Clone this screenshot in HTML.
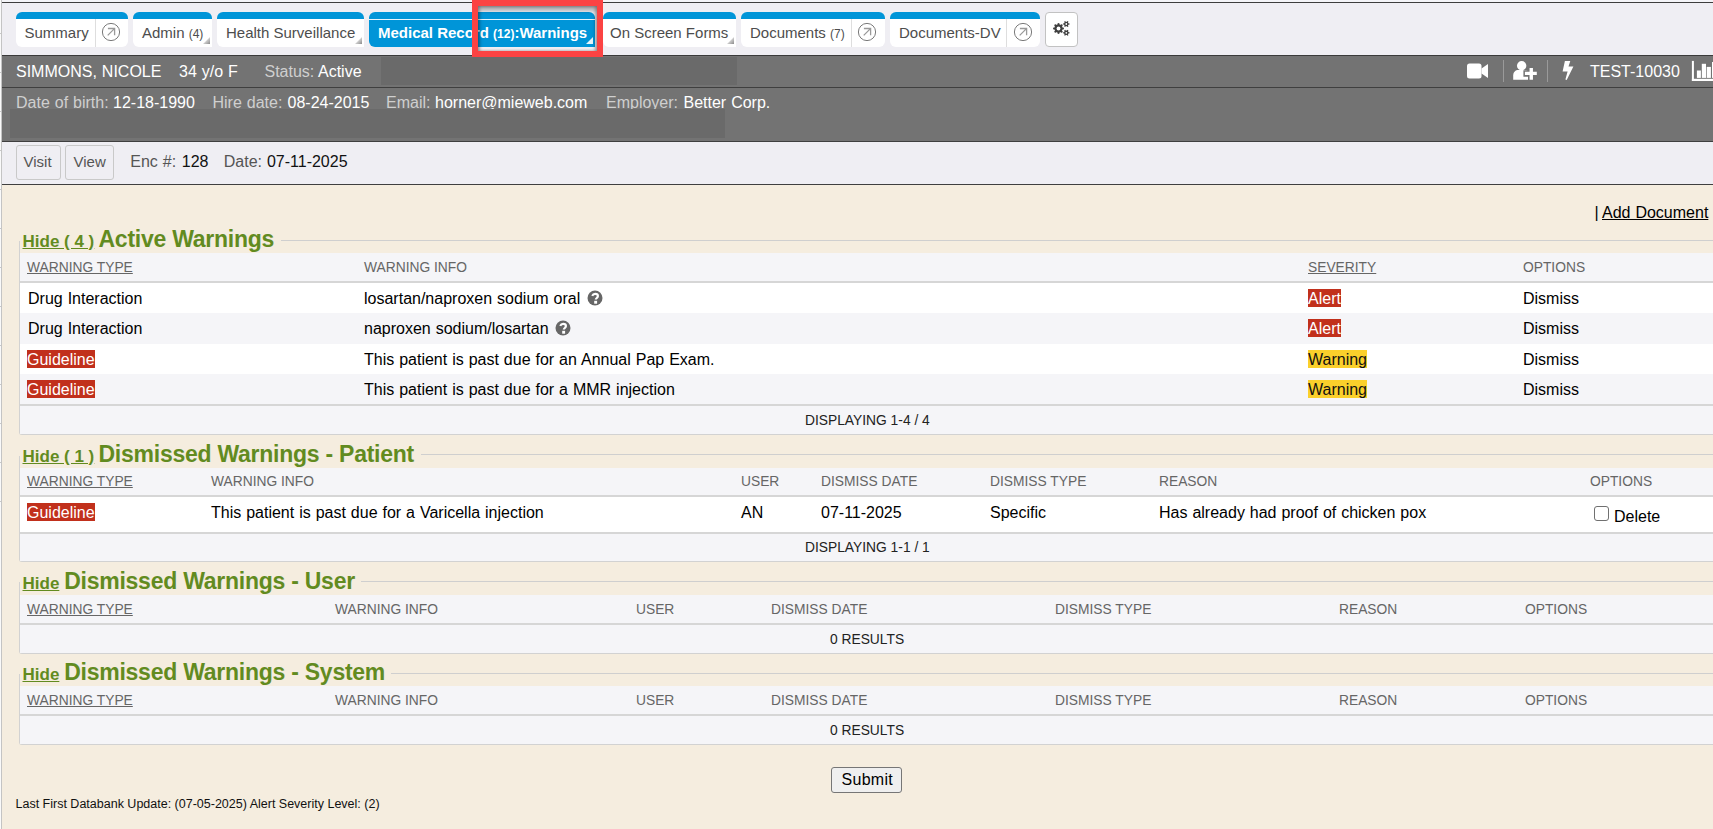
<!DOCTYPE html>
<html><head><meta charset="utf-8"><title>Warnings</title>
<style>
html,body{margin:0;padding:0}
body{width:1713px;height:829px;overflow:hidden;position:relative;font-family:"Liberation Sans",sans-serif;background:#fafafa}
.t{position:absolute;line-height:1;white-space:nowrap}
.w{word-spacing:0.5px}
</style></head><body>
<div style="position:absolute;left:1px;top:0px;width:1px;height:829px;background:#c4c4c4"></div>
<div style="position:absolute;left:0px;top:33px;width:1px;height:1px;background:#c8c8c8"></div>
<div style="position:absolute;left:0px;top:72px;width:1px;height:1px;background:#c8c8c8"></div>
<div style="position:absolute;left:0px;top:111px;width:1px;height:1px;background:#c8c8c8"></div>
<div style="position:absolute;left:0px;top:150px;width:1px;height:1px;background:#c8c8c8"></div>
<div style="position:absolute;left:0px;top:189px;width:1px;height:1px;background:#c8c8c8"></div>
<div style="position:absolute;left:0px;top:228px;width:1px;height:1px;background:#c8c8c8"></div>
<div style="position:absolute;left:0px;top:267px;width:1px;height:1px;background:#c8c8c8"></div>
<div style="position:absolute;left:0px;top:306px;width:1px;height:1px;background:#c8c8c8"></div>
<div style="position:absolute;left:0px;top:345px;width:1px;height:1px;background:#c8c8c8"></div>
<div style="position:absolute;left:0px;top:384px;width:1px;height:1px;background:#c8c8c8"></div>
<div style="position:absolute;left:0px;top:423px;width:1px;height:1px;background:#c8c8c8"></div>
<div style="position:absolute;left:0px;top:462px;width:1px;height:1px;background:#c8c8c8"></div>
<div style="position:absolute;left:0px;top:501px;width:1px;height:1px;background:#c8c8c8"></div>
<div style="position:absolute;left:2px;top:0px;width:1711px;height:2px;background:#f4f4f8"></div>
<div style="position:absolute;left:2px;top:2px;width:1711px;height:1px;background:#3d3d3d"></div>
<div style="position:absolute;left:2px;top:3px;width:1711px;height:52px;background:#efeef3"></div>
<div style="position:absolute;left:2px;top:55px;width:1711px;height:1px;background:#3a3a3a"></div>
<div style="position:absolute;left:2px;top:56px;width:1711px;height:31px;background:#737373"></div>
<div style="position:absolute;left:2px;top:87px;width:1711px;height:1px;background:#3f3f3f"></div>
<div style="position:absolute;left:2px;top:88px;width:1711px;height:53px;background:#737373"></div>
<div style="position:absolute;left:2px;top:141px;width:1711px;height:1px;background:#3f3f3f"></div>
<div style="position:absolute;left:2px;top:142px;width:1711px;height:42px;background:#efeef3"></div>
<div style="position:absolute;left:2px;top:184px;width:1711px;height:1px;background:#3f3f3f"></div>
<div style="position:absolute;left:2px;top:185px;width:1711px;height:644px;background:#f5eddf"></div>
<div style="position:absolute;left:16px;top:12px;width:112px;height:28px;border-top:7px solid #0095d8;background:#fff;border-radius:6px"></div>
<div style="position:absolute;left:95px;top:19px;width:1px;height:28px;background:#dedede"></div>
<div class="t" style="left:24.5px;top:25px;font-size:15px;font-weight:400;color:#4d4d4d;">Summary</div>
<svg style="position:absolute;left:101.4px;top:22.299999999999997px" width="20" height="20" viewBox="0 0 20 20"><circle cx="10" cy="10" r="8.6" fill="none" stroke="#7a7a7a" stroke-width="1"/><path d="M6.7 13.4 L13.2 6.9 M6.9 6.5 L13.6 6.5 L13.6 13.3" fill="none" stroke="#9a9a9a" stroke-width="1.3"/></svg>
<div style="position:absolute;left:133px;top:12px;width:79px;height:28px;border-top:7px solid #0095d8;background:#fff;border-radius:6px 6px 0 6px"></div>
<div class="t" style="left:142px;top:25px;font-size:15px;font-weight:400;color:#4d4d4d;">Admin <span style="font-size:12px">(4)</span></div>
<svg style="position:absolute;left:203px;top:37px" width="7" height="7"><defs><linearGradient id="cg210" x1="0" y1="0" x2="1" y2="1"><stop offset="0.45" stop-color="#d8d8d8"/><stop offset="1" stop-color="#8a8a8a"/></linearGradient></defs><path d="M7 0 L7 7 L0 7 Z" fill="url(#cg210)"/></svg>
<div style="position:absolute;left:217px;top:12px;width:147px;height:28px;border-top:7px solid #0095d8;background:#fff;border-radius:6px 6px 0 6px"></div>
<div class="t" style="left:226px;top:25px;font-size:15px;font-weight:400;color:#4d4d4d;">Health Surveillance</div>
<svg style="position:absolute;left:355px;top:37px" width="7" height="7"><defs><linearGradient id="cg362" x1="0" y1="0" x2="1" y2="1"><stop offset="0.45" stop-color="#d8d8d8"/><stop offset="1" stop-color="#8a8a8a"/></linearGradient></defs><path d="M7 0 L7 7 L0 7 Z" fill="url(#cg362)"/></svg>
<div style="position:absolute;left:369px;top:12px;width:226px;height:28px;border-top:7px solid #0095d8;background:#0095d8;border-radius:6px 6px 0 6px"></div>
<div style="position:absolute;left:369px;top:19px;width:226px;height:1px;background:#e8f4fb"></div>
<div class="t" style="left:378px;top:25px;font-size:15px;font-weight:700;color:#fff;">Medical Record <span style="font-size:12px">(12)</span>:Warnings</div>
<svg style="position:absolute;left:586px;top:37px" width="7" height="7"><path d="M7 0 L7 7 L0 7 Z" fill="rgba(255,255,255,.9)"/></svg>
<div style="position:absolute;left:603px;top:12px;width:133px;height:28px;border-top:7px solid #0095d8;background:#fff;border-radius:6px 6px 0 6px"></div>
<div class="t" style="left:610px;top:25px;font-size:15px;font-weight:400;color:#4d4d4d;">On Screen Forms</div>
<svg style="position:absolute;left:727px;top:37px" width="7" height="7"><defs><linearGradient id="cg734" x1="0" y1="0" x2="1" y2="1"><stop offset="0.45" stop-color="#d8d8d8"/><stop offset="1" stop-color="#8a8a8a"/></linearGradient></defs><path d="M7 0 L7 7 L0 7 Z" fill="url(#cg734)"/></svg>
<div style="position:absolute;left:741px;top:12px;width:144px;height:28px;border-top:7px solid #0095d8;background:#fff;border-radius:6px"></div>
<div style="position:absolute;left:851px;top:19px;width:1px;height:28px;background:#dedede"></div>
<div class="t" style="left:750px;top:25px;font-size:15px;font-weight:400;color:#4d4d4d;">Documents <span style="font-size:12px">(7)</span></div>
<svg style="position:absolute;left:857.3px;top:22.299999999999997px" width="20" height="20" viewBox="0 0 20 20"><circle cx="10" cy="10" r="8.6" fill="none" stroke="#7a7a7a" stroke-width="1"/><path d="M6.7 13.4 L13.2 6.9 M6.9 6.5 L13.6 6.5 L13.6 13.3" fill="none" stroke="#9a9a9a" stroke-width="1.3"/></svg>
<div style="position:absolute;left:890px;top:12px;width:150px;height:28px;border-top:7px solid #0095d8;background:#fff;border-radius:6px"></div>
<div style="position:absolute;left:1006px;top:19px;width:1px;height:28px;background:#dedede"></div>
<div class="t" style="left:899px;top:25px;font-size:15px;font-weight:400;color:#4d4d4d;">Documents-DV</div>
<svg style="position:absolute;left:1012.9px;top:22.299999999999997px" width="20" height="20" viewBox="0 0 20 20"><circle cx="10" cy="10" r="8.6" fill="none" stroke="#7a7a7a" stroke-width="1"/><path d="M6.7 13.4 L13.2 6.9 M6.9 6.5 L13.6 6.5 L13.6 13.3" fill="none" stroke="#9a9a9a" stroke-width="1.3"/></svg>
<div style="position:absolute;left:1045px;top:12px;width:31px;height:33px;background:#fff;border:1px solid #c2c2c2;border-radius:4px"></div>
<svg style="position:absolute;left:1050px;top:18px" width="24" height="20" viewBox="0 0 24 20"><circle cx="8.5" cy="10.5" r="4.2" fill="#3f3f3f"/><line x1="8.5" y1="10.5" x2="13.90" y2="10.50" stroke="#3f3f3f" stroke-width="1.7"/><line x1="8.5" y1="10.5" x2="12.32" y2="14.32" stroke="#3f3f3f" stroke-width="1.7"/><line x1="8.5" y1="10.5" x2="8.50" y2="15.90" stroke="#3f3f3f" stroke-width="1.7"/><line x1="8.5" y1="10.5" x2="4.68" y2="14.32" stroke="#3f3f3f" stroke-width="1.7"/><line x1="8.5" y1="10.5" x2="3.10" y2="10.50" stroke="#3f3f3f" stroke-width="1.7"/><line x1="8.5" y1="10.5" x2="4.68" y2="6.68" stroke="#3f3f3f" stroke-width="1.7"/><line x1="8.5" y1="10.5" x2="8.50" y2="5.10" stroke="#3f3f3f" stroke-width="1.7"/><line x1="8.5" y1="10.5" x2="12.32" y2="6.68" stroke="#3f3f3f" stroke-width="1.7"/><circle cx="8.5" cy="10.5" r="1.9" fill="#fff"/><circle cx="16.3" cy="6" r="2.3" fill="#3f3f3f"/><line x1="16.3" y1="6" x2="19.50" y2="6.00" stroke="#3f3f3f" stroke-width="1.2"/><line x1="16.3" y1="6" x2="17.90" y2="8.77" stroke="#3f3f3f" stroke-width="1.2"/><line x1="16.3" y1="6" x2="14.70" y2="8.77" stroke="#3f3f3f" stroke-width="1.2"/><line x1="16.3" y1="6" x2="13.10" y2="6.00" stroke="#3f3f3f" stroke-width="1.2"/><line x1="16.3" y1="6" x2="14.70" y2="3.23" stroke="#3f3f3f" stroke-width="1.2"/><line x1="16.3" y1="6" x2="17.90" y2="3.23" stroke="#3f3f3f" stroke-width="1.2"/><circle cx="16.3" cy="6" r="0.9" fill="#fff"/><circle cx="16.3" cy="14.8" r="2.3" fill="#3f3f3f"/><line x1="16.3" y1="14.8" x2="19.50" y2="14.80" stroke="#3f3f3f" stroke-width="1.2"/><line x1="16.3" y1="14.8" x2="17.90" y2="17.57" stroke="#3f3f3f" stroke-width="1.2"/><line x1="16.3" y1="14.8" x2="14.70" y2="17.57" stroke="#3f3f3f" stroke-width="1.2"/><line x1="16.3" y1="14.8" x2="13.10" y2="14.80" stroke="#3f3f3f" stroke-width="1.2"/><line x1="16.3" y1="14.8" x2="14.70" y2="12.03" stroke="#3f3f3f" stroke-width="1.2"/><line x1="16.3" y1="14.8" x2="17.90" y2="12.03" stroke="#3f3f3f" stroke-width="1.2"/><circle cx="16.3" cy="14.8" r="0.9" fill="#fff"/></svg>
<div class="t w" style="left:16px;top:64px;font-size:16px;font-weight:400;color:#fff;">SIMMONS, NICOLE</div>
<div class="t w" style="left:179px;top:64px;font-size:16px;font-weight:400;color:#fff;">34 y/o F</div>
<div class="t w" style="left:264.5px;top:64px;font-size:16px;font-weight:400;color:#cfcfcf;">Status:</div>
<div class="t w" style="left:318px;top:64px;font-size:16px;font-weight:400;color:#fff;">Active</div>
<div style="position:absolute;left:381px;top:57px;width:356px;height:28px;background:#6a6a6a"></div>
<svg style="position:absolute;left:1467px;top:63px" width="22" height="16" viewBox="0 0 22 16"><rect x="0" y="0.5" width="14.5" height="15" rx="2.5" fill="#fff"/><path d="M14.5 5.5 L21 1 L21 15 L14.5 10.5Z" fill="#fff"/></svg>
<div style="position:absolute;left:1503px;top:60px;width:1px;height:22px;background:#9a9a9a"></div>
<svg style="position:absolute;left:1512px;top:60px" width="26" height="21" viewBox="0 0 26 21"><circle cx="9.65" cy="5.8" r="4.7" fill="#fff"/><path d="M1.2 19.8 V15.5 C1.2 12 3.5 10.1 6.5 10.1 H12.8 C15.8 10.1 17.6 12 17.6 15.5 V19.8 Z" fill="#fff"/><path d="M19.25 6.4V21M11.4 13.4H26" stroke="#737373" stroke-width="6.5"/><path d="M19.25 7.9V19.8M12.9 13.4H24.8" stroke="#fff" stroke-width="3.4"/></svg>
<div style="position:absolute;left:1547px;top:60px;width:1px;height:22px;background:#9a9a9a"></div>
<svg style="position:absolute;left:1560px;top:60px" width="16" height="22" viewBox="0 0 16 22"><path d="M4.9 1.1 L10.3 1.1 L8.5 6.5 L13.4 6.5 L6.7 20.1 L5.4 19.4 L7.6 11.4 L2.6 11.4 Z" fill="#fff"/></svg>
<div class="t w" style="left:1590px;top:64px;font-size:16px;font-weight:400;color:#fff;">TEST-10030</div>
<svg style="position:absolute;left:1690px;top:60px" width="23" height="22" viewBox="0 0 23 22"><rect x="1.9" y="0.9" width="2" height="20.1" fill="#fff"/><rect x="1.9" y="18.8" width="21.1" height="2.2" fill="#fff"/><rect x="6.9" y="10.5" width="4" height="7.4" fill="#fff"/><rect x="11.8" y="3.8" width="4.2" height="14.1" fill="#fff"/><rect x="16.7" y="6.9" width="4.2" height="11" fill="#fff"/><rect x="22" y="2" width="4" height="15.9" fill="#fff"/></svg>
<div class="t w" style="left:16px;top:95px;font-size:16px;font-weight:400;color:#cfcfcf;">Date of birth:</div>
<div class="t w" style="left:113px;top:95px;font-size:16px;font-weight:400;color:#fff;">12-18-1990</div>
<div class="t w" style="left:212.5px;top:95px;font-size:16px;font-weight:400;color:#cfcfcf;">Hire date:</div>
<div class="t w" style="left:287.5px;top:95px;font-size:16px;font-weight:400;color:#fff;">08-24-2015</div>
<div class="t w" style="left:386px;top:95px;font-size:16px;font-weight:400;color:#cfcfcf;">Email:</div>
<div class="t w" style="left:435px;top:95px;font-size:16px;font-weight:400;color:#fff;">horner@mieweb.com</div>
<div class="t w" style="left:606px;top:95px;font-size:16px;font-weight:400;color:#cfcfcf;">Employer:</div>
<div class="t w" style="left:683.5px;top:95px;font-size:16px;font-weight:400;color:#fff;">Better Corp.</div>
<div style="position:absolute;left:10px;top:109px;width:715px;height:29px;background:#6a6a6a"></div>
<div style="position:absolute;left:16px;top:145px;width:43px;height:33px;background:#efeef3;border:1px solid #c9c9c9;border-radius:3px"></div>
<div class="t" style="left:23.5px;top:154px;font-size:15px;font-weight:400;color:#555;">Visit</div>
<div style="position:absolute;left:65px;top:145px;width:47px;height:33px;background:#efeef3;border:1px solid #c9c9c9;border-radius:3px"></div>
<div class="t" style="left:73.5px;top:154px;font-size:15px;font-weight:400;color:#555;">View</div>
<div class="t w" style="left:130.3px;top:154px;font-size:16px;font-weight:400;color:#555;">Enc #:</div>
<div class="t w" style="left:181.8px;top:154px;font-size:16px;font-weight:400;color:#111;">128</div>
<div class="t w" style="left:223.8px;top:154px;font-size:16px;font-weight:400;color:#555;">Date:</div>
<div class="t w" style="left:266.9px;top:154px;font-size:16px;font-weight:400;color:#111;">07-11-2025</div>
<div class="t w" style="left:1594.5px;top:205px;font-size:16px;font-weight:400;color:#000;">|</div>
<div class="t w" style="left:1602px;top:205px;font-size:16px;font-weight:400;color:#000;text-decoration:underline">Add Document</div>
<div class="t" style="left:22.5px;top:233px;font-size:17px;font-weight:700;color:#628b1f;text-decoration:underline">Hide ( 4 )</div>
<div class="t" style="left:98.5px;top:228px;font-size:23px;font-weight:700;color:#628b1f;letter-spacing:-0.25px">Active Warnings</div>
<div style="position:absolute;left:281px;top:240px;width:1432px;height:1px;background:#cfcfcf"></div>
<div style="position:absolute;left:19px;top:241px;width:1694px;height:194px;border-left:1px solid #d2d2d2;border-bottom:1px solid #d2d2d2;border-bottom-left-radius:3px;box-sizing:border-box"></div>
<div style="position:absolute;left:20px;top:253px;width:1693px;height:28px;background:#f5f5f8"></div>
<div style="position:absolute;left:20px;top:281px;width:1693px;height:2px;background:#d6d6d6"></div>
<div style="position:absolute;left:20px;top:283px;width:1693px;height:30px;background:#fff"></div>
<div style="position:absolute;left:20px;top:313px;width:1693px;height:31px;background:#f5f5f8"></div>
<div style="position:absolute;left:20px;top:344px;width:1693px;height:30px;background:#fff"></div>
<div style="position:absolute;left:20px;top:374px;width:1693px;height:30px;background:#f5f5f8"></div>
<div style="position:absolute;left:20px;top:404px;width:1693px;height:2px;background:#d6d6d6"></div>
<div style="position:absolute;left:20px;top:406px;width:1693px;height:28px;background:#f5f5f8"></div>
<div class="t" style="left:27px;top:261px;font-size:13.8px;font-weight:400;color:#666;text-decoration:underline">WARNING TYPE</div>
<div class="t" style="left:364px;top:261px;font-size:13.8px;font-weight:400;color:#666;">WARNING INFO</div>
<div class="t" style="left:1308px;top:261px;font-size:13.8px;font-weight:400;color:#666;text-decoration:underline">SEVERITY</div>
<div class="t" style="left:1523px;top:261px;font-size:13.8px;font-weight:400;color:#666;">OPTIONS</div>
<div class="t w" style="left:28px;top:291px;font-size:16px;font-weight:400;color:#000;">Drug Interaction</div>
<div class="t w" style="left:364px;top:291px;font-size:16px;font-weight:400;color:#000;">losartan/naproxen sodium oral</div>
<svg style="position:absolute;left:587px;top:290px" width="16" height="16" viewBox="0 0 16 16"><circle cx="8" cy="8" r="7.5" fill="#666"/><path d="M5.2 5.9 C5.9 4.4 6.9 3.9 8.2 3.9 C9.8 3.9 10.9 4.8 10.9 6.1 C10.9 7.9 8.8 8 8.8 9.6" fill="none" stroke="#fff" stroke-width="2.2"/><rect x="7.2" y="10.8" width="2.9" height="2.9" fill="#fff"/></svg>
<div class="t w" style="left:1308px;top:291px;font-size:16px;font-weight:400;color:#fff;background:#c1301c;line-height:19px;height:18px;top:289px">Alert</div>
<div class="t w" style="left:1523px;top:291px;font-size:16px;font-weight:400;color:#000;">Dismiss</div>
<div class="t w" style="left:28px;top:321px;font-size:16px;font-weight:400;color:#000;">Drug Interaction</div>
<div class="t w" style="left:364px;top:321px;font-size:16px;font-weight:400;color:#000;">naproxen sodium/losartan</div>
<svg style="position:absolute;left:555px;top:320px" width="16" height="16" viewBox="0 0 16 16"><circle cx="8" cy="8" r="7.5" fill="#666"/><path d="M5.2 5.9 C5.9 4.4 6.9 3.9 8.2 3.9 C9.8 3.9 10.9 4.8 10.9 6.1 C10.9 7.9 8.8 8 8.8 9.6" fill="none" stroke="#fff" stroke-width="2.2"/><rect x="7.2" y="10.8" width="2.9" height="2.9" fill="#fff"/></svg>
<div class="t w" style="left:1308px;top:321px;font-size:16px;font-weight:400;color:#fff;background:#c1301c;line-height:19px;height:18px;top:319px">Alert</div>
<div class="t w" style="left:1523px;top:321px;font-size:16px;font-weight:400;color:#000;">Dismiss</div>
<div class="t w" style="left:27px;top:352px;font-size:16px;font-weight:400;color:#fff;background:#c1301c;line-height:19px;height:18px;top:350px">Guideline</div>
<div class="t w" style="left:364px;top:352px;font-size:16px;font-weight:400;color:#000;">This patient is past due for an Annual Pap Exam.</div>
<div class="t w" style="left:1308px;top:352px;font-size:16px;font-weight:400;color:#111;background:#fbd02b;line-height:19px;height:18px;top:350px">Warning</div>
<div class="t w" style="left:1523px;top:352px;font-size:16px;font-weight:400;color:#000;">Dismiss</div>
<div class="t w" style="left:27px;top:382px;font-size:16px;font-weight:400;color:#fff;background:#c1301c;line-height:19px;height:18px;top:380px">Guideline</div>
<div class="t w" style="left:364px;top:382px;font-size:16px;font-weight:400;color:#000;">This patient is past due for a MMR injection</div>
<div class="t w" style="left:1308px;top:382px;font-size:16px;font-weight:400;color:#111;background:#fbd02b;line-height:19px;height:18px;top:380px">Warning</div>
<div class="t w" style="left:1523px;top:382px;font-size:16px;font-weight:400;color:#000;">Dismiss</div>
<div class="t" style="left:805px;top:414px;font-size:13.8px;font-weight:400;color:#222;">DISPLAYING 1-4 / 4</div>
<div class="t" style="left:22.5px;top:448px;font-size:17px;font-weight:700;color:#628b1f;text-decoration:underline">Hide ( 1 )</div>
<div class="t" style="left:98.5px;top:443px;font-size:23px;font-weight:700;color:#628b1f;letter-spacing:-0.25px">Dismissed Warnings - Patient</div>
<div style="position:absolute;left:421px;top:454px;width:1292px;height:1px;background:#cfcfcf"></div>
<div style="position:absolute;left:19px;top:456px;width:1694px;height:106px;border-left:1px solid #d2d2d2;border-bottom:1px solid #d2d2d2;border-bottom-left-radius:3px;box-sizing:border-box"></div>
<div style="position:absolute;left:20px;top:468px;width:1693px;height:27px;background:#f5f5f8"></div>
<div style="position:absolute;left:20px;top:495px;width:1693px;height:2px;background:#d6d6d6"></div>
<div style="position:absolute;left:20px;top:497px;width:1693px;height:35px;background:#fff"></div>
<div style="position:absolute;left:20px;top:532px;width:1693px;height:2px;background:#d6d6d6"></div>
<div style="position:absolute;left:20px;top:534px;width:1693px;height:27px;background:#f5f5f8"></div>
<div class="t" style="left:27px;top:475px;font-size:13.8px;font-weight:400;color:#666;text-decoration:underline">WARNING TYPE</div>
<div class="t" style="left:211px;top:475px;font-size:13.8px;font-weight:400;color:#666;">WARNING INFO</div>
<div class="t" style="left:741px;top:475px;font-size:13.8px;font-weight:400;color:#666;">USER</div>
<div class="t" style="left:821px;top:475px;font-size:13.8px;font-weight:400;color:#666;">DISMISS DATE</div>
<div class="t" style="left:990px;top:475px;font-size:13.8px;font-weight:400;color:#666;">DISMISS TYPE</div>
<div class="t" style="left:1159px;top:475px;font-size:13.8px;font-weight:400;color:#666;">REASON</div>
<div class="t" style="left:1590px;top:475px;font-size:13.8px;font-weight:400;color:#666;">OPTIONS</div>
<div class="t w" style="left:27px;top:505px;font-size:16px;font-weight:400;color:#fff;background:#c1301c;line-height:19px;height:18px;top:503px">Guideline</div>
<div class="t w" style="left:211px;top:505px;font-size:16px;font-weight:400;color:#000;">This patient is past due for a Varicella injection</div>
<div class="t w" style="left:741px;top:505px;font-size:16px;font-weight:400;color:#000;">AN</div>
<div class="t w" style="left:821px;top:505px;font-size:16px;font-weight:400;color:#000;">07-11-2025</div>
<div class="t w" style="left:990px;top:505px;font-size:16px;font-weight:400;color:#000;">Specific</div>
<div class="t w" style="left:1159px;top:505px;font-size:16px;font-weight:400;color:#000;">Has already had proof of chicken pox</div>
<div style="position:absolute;left:1594px;top:506px;width:14.5px;height:14.5px;background:#fff;border:1.3px solid #707070;border-radius:3px;box-sizing:border-box"></div>
<div class="t w" style="left:1614px;top:509px;font-size:16px;font-weight:400;color:#000;">Delete</div>
<div class="t" style="left:805px;top:541px;font-size:13.8px;font-weight:400;color:#222;">DISPLAYING 1-1 / 1</div>
<div class="t" style="left:22.5px;top:575px;font-size:17px;font-weight:700;color:#628b1f;text-decoration:underline">Hide</div>
<div class="t" style="left:64.2px;top:570px;font-size:23px;font-weight:700;color:#628b1f;letter-spacing:-0.25px">Dismissed Warnings - User</div>
<div style="position:absolute;left:361px;top:581px;width:1352px;height:1px;background:#cfcfcf"></div>
<div style="position:absolute;left:19px;top:582px;width:1694px;height:72px;border-left:1px solid #d2d2d2;border-bottom:1px solid #d2d2d2;border-bottom-left-radius:3px;box-sizing:border-box"></div>
<div style="position:absolute;left:20px;top:595px;width:1693px;height:28px;background:#f5f5f8"></div>
<div style="position:absolute;left:20px;top:623px;width:1693px;height:2px;background:#d6d6d6"></div>
<div style="position:absolute;left:20px;top:625px;width:1693px;height:28px;background:#f5f5f8"></div>
<div class="t" style="left:27px;top:603px;font-size:13.8px;font-weight:400;color:#666;text-decoration:underline">WARNING TYPE</div>
<div class="t" style="left:335px;top:603px;font-size:13.8px;font-weight:400;color:#666;">WARNING INFO</div>
<div class="t" style="left:636px;top:603px;font-size:13.8px;font-weight:400;color:#666;">USER</div>
<div class="t" style="left:771px;top:603px;font-size:13.8px;font-weight:400;color:#666;">DISMISS DATE</div>
<div class="t" style="left:1055px;top:603px;font-size:13.8px;font-weight:400;color:#666;">DISMISS TYPE</div>
<div class="t" style="left:1339px;top:603px;font-size:13.8px;font-weight:400;color:#666;">REASON</div>
<div class="t" style="left:1525px;top:603px;font-size:13.8px;font-weight:400;color:#666;">OPTIONS</div>
<div class="t" style="left:830px;top:633px;font-size:13.8px;font-weight:400;color:#222;">0 RESULTS</div>
<div class="t" style="left:22.5px;top:666px;font-size:17px;font-weight:700;color:#628b1f;text-decoration:underline">Hide</div>
<div class="t" style="left:64.2px;top:661px;font-size:23px;font-weight:700;color:#628b1f;letter-spacing:-0.25px">Dismissed Warnings - System</div>
<div style="position:absolute;left:391px;top:673px;width:1322px;height:1px;background:#cfcfcf"></div>
<div style="position:absolute;left:19px;top:674px;width:1694px;height:71px;border-left:1px solid #d2d2d2;border-bottom:1px solid #d2d2d2;border-bottom-left-radius:3px;box-sizing:border-box"></div>
<div style="position:absolute;left:20px;top:686px;width:1693px;height:28px;background:#f5f5f8"></div>
<div style="position:absolute;left:20px;top:714px;width:1693px;height:2px;background:#d6d6d6"></div>
<div style="position:absolute;left:20px;top:716px;width:1693px;height:28px;background:#f5f5f8"></div>
<div class="t" style="left:27px;top:694px;font-size:13.8px;font-weight:400;color:#666;text-decoration:underline">WARNING TYPE</div>
<div class="t" style="left:335px;top:694px;font-size:13.8px;font-weight:400;color:#666;">WARNING INFO</div>
<div class="t" style="left:636px;top:694px;font-size:13.8px;font-weight:400;color:#666;">USER</div>
<div class="t" style="left:771px;top:694px;font-size:13.8px;font-weight:400;color:#666;">DISMISS DATE</div>
<div class="t" style="left:1055px;top:694px;font-size:13.8px;font-weight:400;color:#666;">DISMISS TYPE</div>
<div class="t" style="left:1339px;top:694px;font-size:13.8px;font-weight:400;color:#666;">REASON</div>
<div class="t" style="left:1525px;top:694px;font-size:13.8px;font-weight:400;color:#666;">OPTIONS</div>
<div class="t" style="left:830px;top:724px;font-size:13.8px;font-weight:400;color:#222;">0 RESULTS</div>
<div style="position:absolute;left:831px;top:767px;width:69px;height:24px;background:#efefef;border:1px solid #767676;border-radius:3px"></div>
<div class="t w" style="left:841.5px;top:772px;font-size:16px;font-weight:400;color:#000;letter-spacing:0.3px">Submit</div>
<div class="t" style="left:15.5px;top:798px;font-size:12.5px;font-weight:400;color:#111;">Last First Databank Update: (07-05-2025) Alert Severity Level: (2)</div>
<div style="position:absolute;left:472px;top:0px;width:131px;height:57px;border:6px solid #fb4343;box-sizing:border-box;box-shadow:inset 0 4px 5px rgba(0,0,0,.35), inset 2px 0 3px rgba(0,0,0,.2), inset -2px 0 3px rgba(0,0,0,.2)"></div>
</body></html>
